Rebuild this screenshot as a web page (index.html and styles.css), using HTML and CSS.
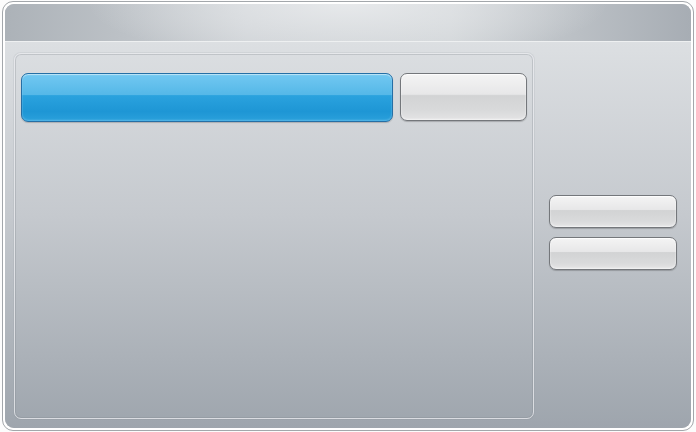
FILE: index.html
```html
<!DOCTYPE html>
<html>
<head>
    <link rel="stylesheet" href="styles.css">
</head>
<body>
    <div class="window">
        <div class="frame">
            <div class="titlebar"></div>
            <div class="content">
                <div class="panel">
                    <div class="toolbar">
                        <button class="btn btn-blue btn-wide"></button>
                        <button class="btn btn-grey btn-side"></button>
                    </div>
                </div>
                <div class="sidebar">
                    <button class="btn btn-grey btn-small"></button>
                    <button class="btn btn-grey btn-small"></button>
                </div>
            </div>
        </div>
    </div>
</body>
</html>
```

FILE: styles.css
```css
* {
    margin: 0;
    padding: 0;
    box-sizing: border-box;
}

body {
    font-family: 'Liberation Sans', Arial, sans-serif;
    background-color: #fcfcfc;
    width: 696px;
    height: 432px;
    overflow: hidden;
}

.window {
    margin: 1px 2px 0 2px;
    width: 692px;
    height: 430px;
    border: 1px solid #a3a7ab;
    border-radius: 11px;
    padding: 2px;
    background: #ffffff;
}

.frame {
    height: 100%;
    border-radius: 9px;
    overflow: hidden;
    display: flex;
    flex-direction: column;
    box-shadow: inset 0 0 0 1px rgba(120, 126, 134, 0.5);
}

.titlebar {
    height: 38px;
    background:
        radial-gradient(ellipse 260px 60px at 50% 0, rgba(232, 234, 236, 0.95), rgba(232, 234, 236, 0) 100%),
        linear-gradient(to right, #acb2b8, #cdd1d5 35%, #d0d4d7 65%, #a7adb4);
    border-bottom: 1px solid #eef0f1;
}

.content {
    flex: 1;
    display: flex;
    padding: 11px 0 9px 9px;
    background: linear-gradient(to bottom, #dcdfe2, #c5c9ce 45%, #9ea5ad);
}

.panel {
    width: 520px;
    border-radius: 7px;
    border: 1px solid rgba(232, 234, 237, 0.8);
    box-shadow: inset 0 0 0 1px rgba(130, 136, 144, 0.3), 0 0 0 1px rgba(130, 136, 144, 0.12);
    padding: 19px 6px;
}

.toolbar {
    display: flex;
    gap: 7px;
}

.btn {
    border-radius: 7px;
    cursor: pointer;
}

.btn-wide {
    width: 373px;
    height: 49px;
}

.btn-side {
    width: 127px;
    height: 48px;
}

.btn-small {
    width: 128px;
    height: 33px;
}

.btn-blue {
    border: 1px solid #256fa5;
    background: linear-gradient(to bottom, #72c8f1, #55b8e8 44%, #2aa2de 46%, #1e96d5 80%, #2aa0db);
    box-shadow: inset 0 1px 1px rgba(255, 255, 255, 0.55), inset 0 -1px 2px rgba(120, 200, 240, 0.6), 0 1px 1px rgba(0, 0, 0, 0.18);
}

.btn-grey {
    border: 1px solid #74777b;
    background: linear-gradient(to bottom, #f4f4f4, #e7e7e8 44%, #d2d3d4 47%, #d9dadb 80%, #e4e4e5);
    box-shadow: inset 0 1px 1px rgba(255, 255, 255, 0.9), inset 0 -1px 2px rgba(255, 255, 255, 0.6), 0 1px 1px rgba(0, 0, 0, 0.2);
}

.sidebar {
    flex: 1;
    display: flex;
    flex-direction: column;
    gap: 9px;
    padding: 142px 0 0 15px;
}
```
